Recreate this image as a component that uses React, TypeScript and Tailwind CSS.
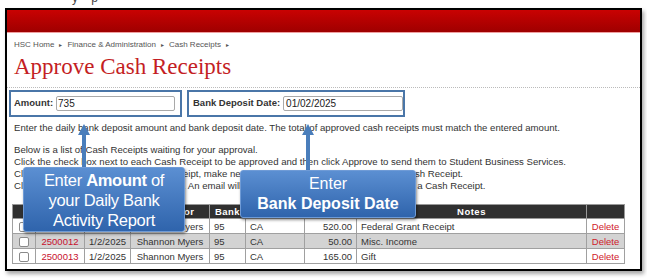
import React from "react";

const rows = [
    {num: "2500011", date: "1/2/2025", name: "Shannon Myers", bank: "95", type: "CA", amount: "520.00", notes: "Federal Grant Receipt", shade: false},
    {num: "2500012", date: "1/2/2025", name: "Shannon Myers", bank: "95", type: "CA", amount: "50.00", notes: "Misc. Income", shade: true},
    {num: "2500013", date: "1/2/2025", name: "Shannon Myers", bank: "95", type: "CA", amount: "165.00", notes: "Gift", shade: false},
];

function Checkbox() {
    return <span className="inline-block w-[10px] h-[10px] border border-[#8a8a8a] rounded-[2px] bg-white align-middle" />;
}

function Arrow({left, top, height}: {left: string; top: string; height: string}) {
    return (
        <div className={`absolute ${left} ${top} ${height} w-[12px] flex flex-col items-center`}>
            <div className="w-0 h-0 border-l-[6px] border-r-[6px] border-b-[11px] border-l-transparent border-r-transparent border-b-[#4a7ebb]" />
            <div className="w-[4px] flex-1 bg-[#4a7ebb]" />
        </div>
    );
}

export default function App() {
    return (
        <div className="relative w-[647px] h-[278px] bg-white overflow-hidden font-['Liberation_Sans',Arial,sans-serif] text-[#333]">
            <div className="h-[8px] overflow-hidden">
                <div className="-mt-[9px] pl-[72px] text-[12px] leading-[14px] text-[#444]">y&nbsp;&nbsp;&nbsp;&nbsp;p</div>
            </div>

            <div className="ml-[5px] w-[637px] h-[263px] border-2 border-black bg-white shadow-[2px_3px_4px_rgba(0,0,0,0.35)]">
                <div className="h-[23px] bg-gradient-to-b from-[#c90202] to-[#9f0000] border-b border-[#f0a0a0]" />

                <div className="mt-[7px] px-[7px] text-[8px] leading-[10px] text-[#555] flex items-center gap-[5px]">
                    <span>HSC Home</span>
                    <span className="text-[6px]">▸</span>
                    <span>Finance &amp; Administration</span>
                    <span className="text-[6px]">▸</span>
                    <span>Cash Receipts</span>
                    <span className="text-[6px]">▸</span>
                </div>

                <h1 className="mt-[4px] px-[7px] font-['Liberation_Serif','Times_New_Roman',serif] text-[23px] leading-[26px] text-[#c41e24]">
                    Approve Cash Receipts
                </h1>

                <div className="mt-[7px] border-b border-dotted border-[#bbb]" />

                <div className="mt-[2px] ml-[2px] flex gap-[5px] text-[9.5px]">
                    <div className="w-[173px] h-[27px] border-2 border-[#4a76a8] flex items-center pl-[3px] pr-[5px] gap-[3px]">
                        <span className="font-bold">Amount:</span>
                        <div className="flex-1 h-[15px] border border-[#a9a9a9] rounded-[2px] px-[1px] text-[10px] leading-[13px] text-[#222]">735</div>
                    </div>
                    <div className="w-[218px] h-[27px] border-2 border-[#4a76a8] flex items-center pl-[4px] pr-[0px] gap-[3px]">
                        <span className="font-bold">Bank Deposit Date:</span>
                        <div className="flex-1 h-[15px] border border-[#a9a9a9] rounded-[2px] px-[2px] text-[10px] leading-[13px] text-[#222]">01/02/2025</div>
                    </div>
                </div>

                <div className="mt-[5px] px-[7px] text-[9.6px] leading-[12px]">
                    Enter the daily bank deposit amount and bank deposit date. The total of approved cash receipts must match the entered amount.
                </div>

                <div className="mt-[10px] px-[7px] text-[9.6px] leading-[12px]">
                    <div>Below is a list of Cash Receipts waiting for your approval.</div>
                    <div>Click the check box next to each Cash Receipt to be approved and then click Approve to send them to Student Business Services.</div>
                    <div>Click a Cash Receipt number to edit receipt, make necessary changes and then resave the Cash Receipt.</div>
                    <div>Click Delete to delete any Cash Receipt. An email will be sent to the Preparer when you delete a Cash Receipt.</div>
                </div>

                <table className="mt-[12px] ml-[5px] w-[612px] border-collapse table-fixed text-[9.5px]">
                    <colgroup>
                        <col className="w-[23px]" />
                        <col className="w-[49px]" />
                        <col className="w-[46px]" />
                        <col className="w-[79px]" />
                        <col className="w-[36px]" />
                        <col className="w-[59px]" />
                        <col className="w-[52px]" />
                        <col className="w-[230px]" />
                        <col className="w-[38px]" />
                    </colgroup>
                    <thead>
                        <tr className="bg-[#303030] text-white h-[14px]">
                            {["", "Number", "Date", "Depositor", "Bank", "Type", "Amount", "Notes", ""].map((h, i) => (
                                <th key={i} className="border border-[#999] font-bold tracking-[0.5px] leading-[12px] p-0 text-center">{h}</th>
                            ))}
                        </tr>
                    </thead>
                    <tbody>
                        {rows.map((r) => (
                            <tr key={r.num} className={`h-[15px] ${r.shade ? "bg-[#d3d3d3]" : "bg-white"}`}>
                                <td className="border border-[#a0a0a0] text-center p-0 leading-[13px]"><Checkbox /></td>
                                <td className="border border-[#a0a0a0] text-center text-[#c8102e] p-0 leading-[13px]">{r.num}</td>
                                <td className="border border-[#a0a0a0] text-center p-0 leading-[13px]">{r.date}</td>
                                <td className="border border-[#a0a0a0] text-center p-0 leading-[13px]">{r.name}</td>
                                <td className="border border-[#a0a0a0] pl-[4px] leading-[13px]">{r.bank}</td>
                                <td className="border border-[#a0a0a0] pl-[4px] leading-[13px]">{r.type}</td>
                                <td className="border border-[#a0a0a0] text-right pr-[4px] leading-[13px]">{r.amount}</td>
                                <td className="border border-[#a0a0a0] pl-[4px] leading-[13px]">{r.notes}</td>
                                <td className="border border-[#a0a0a0] text-center text-[#d0202a] p-0 leading-[13px]">Delete</td>
                            </tr>
                        ))}
                    </tbody>
                </table>
            </div>

            <Arrow left="left-[78px]" top="top-[124px]" height="h-[44px]" />
            <Arrow left="left-[302px]" top="top-[124px]" height="h-[47px]" />

            <div className="absolute left-[23px] top-[167px] w-[162px] h-[65px] rounded-[3px] border border-[#6f9bd6] bg-gradient-to-b from-[#5b8fd2] to-[#2f64ac] shadow-[1px_2px_3px_rgba(0,0,0,0.45)] flex flex-col items-center justify-center text-white text-[16.5px] leading-[20px] tracking-[-0.3px]">
                <div>Enter <span className="font-bold">Amount</span> of</div>
                <div>your Daily Bank</div>
                <div>Activity Report</div>
            </div>

            <div className="absolute left-[240px] top-[170px] w-[176px] h-[48px] rounded-[3px] border border-[#6f9bd6] bg-gradient-to-b from-[#5b8fd2] to-[#2f64ac] shadow-[1px_2px_3px_rgba(0,0,0,0.45)] flex flex-col items-center justify-center text-white text-[16px] leading-[20px]">
                <div>Enter</div>
                <div className="font-bold">Bank Deposit Date</div>
            </div>
        </div>
    );
}
